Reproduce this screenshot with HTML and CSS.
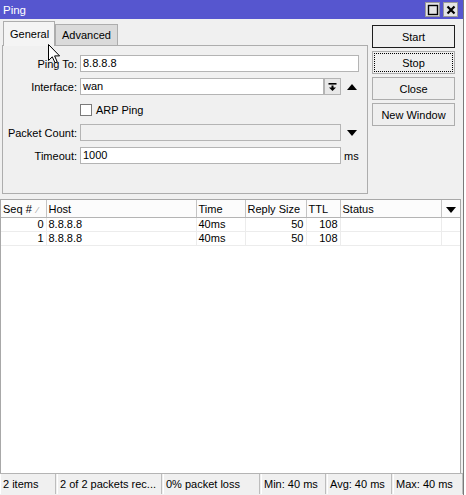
FILE: index.html
```html
<!DOCTYPE html>
<html>
<head>
<meta charset="utf-8">
<title>Ping</title>
<link rel="stylesheet" href="styles.css">
</head>
<body>
<div class="window">
  <div class="titlebar">
    <span class="title">Ping</span>
    <div class="tb-buttons">
      <span class="tb-btn"><svg width="12" height="12" viewBox="0 0 12 12"><rect x="1.5" y="1.5" width="9" height="9" fill="none" stroke="#000" stroke-width="1.4"/></svg></span>
      <span class="tb-btn"><svg width="12" height="12" viewBox="0 0 12 12"><path d="M2.5 2.5 L9.5 9.5 M9.5 2.5 L2.5 9.5" stroke="#000" stroke-width="2.2"/></svg></span>
    </div>
  </div>

  <div class="top">
    <div class="left">
      <div class="tabs">
        <div class="tab selected">General</div>
        <div class="tab">Advanced</div>
      </div>
      <div class="panel">
        <div class="row">
          <label class="lbl">Ping To:</label>
          <div class="input wide">8.8.8.8</div>
        </div>
        <div class="row">
          <label class="lbl">Interface:</label>
          <div class="input iface">wan</div>
          <span class="dd-btn"><svg width="9" height="10" viewBox="0 0 9 10"><rect x="0.5" y="1" width="8" height="1.6" fill="#000"/><rect x="3.5" y="3.5" width="2" height="2.5" fill="#000"/><path d="M1 5.5 L8 5.5 L4.5 9 Z" fill="#000"/></svg></span>
          <span class="arrow"><svg width="10" height="6" viewBox="0 0 10 6"><path d="M0 6 L10 6 L5 0 Z" fill="#000"/></svg></span>
        </div>
        <div class="row">
          <span class="lbl"></span>
          <span class="checkbox"></span>
          <span class="cb-text">ARP Ping</span>
        </div>
        <div class="row">
          <label class="lbl">Packet Count:</label>
          <div class="input std disabled"></div>
          <span class="arrow"><svg width="10" height="6" viewBox="0 0 10 6"><path d="M0 0 L10 0 L5 6 Z" fill="#000"/></svg></span>
        </div>
        <div class="row">
          <label class="lbl">Timeout:</label>
          <div class="input std">1000</div>
          <span class="unit">ms</span>
        </div>
      </div>
    </div>
    <div class="buttons">
      <div class="btn default">Start</div>
      <div class="btn focus">Stop</div>
      <div class="btn">Close</div>
      <div class="btn">New Window</div>
    </div>
  </div>

  <div class="grid">
    <table>
      <colgroup>
        <col class="c-seq"><col class="c-host"><col class="c-time"><col class="c-reply"><col class="c-ttl"><col class="c-status"><col class="c-menu">
      </colgroup>
      <thead>
        <tr>
          <th>Seq # <span class="sort">&#8260;</span></th>
          <th>Host</th>
          <th>Time</th>
          <th>Reply Size</th>
          <th>TTL</th>
          <th>Status</th>
          <th class="menu"><svg width="10" height="6" viewBox="0 0 10 6"><path d="M0 0 L10 0 L5 6 Z" fill="#000"/></svg></th>
        </tr>
      </thead>
      <tbody>
        <tr>
          <td class="num">0</td><td>8.8.8.8</td><td>40ms</td><td class="num">50</td><td class="num">108</td><td></td><td></td>
        </tr>
        <tr>
          <td class="num">1</td><td>8.8.8.8</td><td>40ms</td><td class="num">50</td><td class="num">108</td><td></td><td></td>
        </tr>
      </tbody>
    </table>
  </div>

  <div class="statusbar">
    <div class="cell s1">2 items</div>
    <div class="cell s2">2 of 2 packets rec...</div>
    <div class="cell s3">0% packet loss</div>
    <div class="cell s4">Min: 40 ms</div>
    <div class="cell s5">Avg: 40 ms</div>
    <div class="cell s6">Max: 40 ms</div>
  </div>

  <svg class="cursor" width="13" height="20" viewBox="0 0 13 20"><path d="M0.5 0.5 L0.5 16.5 L4.3 12.8 L7 18.8 L9.2 17.8 L6.6 11.9 L11.6 11.9 Z" fill="#fff" stroke="#000" stroke-width="1" stroke-linejoin="miter"/></svg>
</div>
</body>
</html>
```
FILE: styles.css
```css
html, body {
  margin: 0;
  padding: 0;
  background: #ffffff;
}
body {
  width: 466px;
  height: 495px;
  overflow: hidden;
  font-family: "Liberation Sans", Arial, sans-serif;
  font-size: 11px;
  color: #000;
}
.window {
  position: relative;
  width: 463px;
  height: 495px;
  background: #f0f0f0;
  border-right: 1px solid #7a7a7a;
}
.titlebar {
  height: 19px;
  background: #5656cf;
  display: flex;
  align-items: center;
  justify-content: space-between;
}
.title {
  color: #fff;
  font-size: 11.5px;
  padding-left: 3px;
  padding-top: 1px;
}
.tb-buttons {
  display: flex;
  gap: 3px;
  padding-right: 5px;
}
.tb-btn {
  width: 13px;
  height: 13px;
  background: #e4e4e4;
  border: 1px solid #9a9a9a;
  display: flex;
  align-items: center;
  justify-content: center;
}
.top {
  display: flex;
  padding-top: 2px;
}
.left {
  margin-left: 2px;
  width: 366px;
}
.tabs {
  display: flex;
  align-items: flex-end;
  height: 24px;
  padding-left: 1px;
}
.tab {
  box-sizing: border-box;
  height: 21px;
  padding: 0 6px 0 6px;
  border: 1px solid #adadad;
  border-bottom: none;
  background: #dadada;
  display: flex;
  align-items: center;
  width: 63px;
}
.tab.selected {
  height: 25px;
  width: 52px;
  margin-bottom: -1px;
  background: #f4f4f4;
  position: relative;
  z-index: 1;
  padding-bottom: 1px;
}
.panel {
  box-sizing: border-box;
  height: 149px;
  border: 1px solid #adadad;
  background: #f0f0f0;
  padding-top: 9px;
}
.row {
  display: flex;
  align-items: center;
  height: 17px;
  margin-bottom: 6px;
}
.lbl {
  width: 74px;
  text-align: right;
  flex: none;
}
.input {
  box-sizing: border-box;
  height: 17px;
  margin-left: 3px;
  border: 1px solid #b4b4b4;
  background: #fff;
  padding-left: 2px;
  line-height: 15px;
  flex: none;
}
.input.wide { width: 279px; }
.input.iface { width: 244px; }
.input.std { width: 261px; }
.input.disabled { background: #f0f0f0; }
.dd-btn {
  box-sizing: border-box;
  width: 17px;
  height: 17px;
  border: 1px solid #b4b4b4;
  background: #e8e8e8;
  display: flex;
  align-items: center;
  justify-content: center;
  flex: none;
}
.arrow {
  margin-left: 6px;
  display: flex;
  align-items: center;
}
.checkbox {
  box-sizing: border-box;
  width: 12px;
  height: 12px;
  margin-left: 3px;
  border: 1px solid #7a7a7a;
  background: #fff;
  flex: none;
}
.cb-text {
  margin-left: 4px;
}
.unit {
  margin-left: 3px;
}
.buttons {
  margin-left: 4px;
  margin-top: 4px;
  display: flex;
  flex-direction: column;
  gap: 3px;
}
.btn {
  box-sizing: border-box;
  width: 83px;
  height: 23px;
  border: 1px solid #adadad;
  background: #efefef;
  display: flex;
  align-items: center;
  justify-content: center;
}
.btn.default {
  border: 1px solid #1e1e1e;
}
.btn.focus {
  outline: 1px dotted #000;
  outline-offset: -3px;
}
.grid {
  box-sizing: border-box;
  margin-top: 5px;
  width: 461px;
  height: 274px;
  border: 1px solid #a8a8a8;
  border-bottom: none;
  background: #fff;
}
table {
  border-collapse: collapse;
  table-layout: fixed;
  width: 459px;
}
.c-seq { width: 45px; }
.c-host { width: 150px; }
.c-time { width: 49px; }
.c-reply { width: 61px; }
.c-ttl { width: 34px; }
.c-status { width: 101px; }
.c-menu { width: 19px; }
th {
  height: 17px;
  font-weight: normal;
  text-align: left;
  padding: 0 2px;
  border-right: 1px solid #c4c4c4;
  border-bottom: 1px solid #b4b4b4;
  background: #fcfcfc;
  white-space: nowrap;
  overflow: hidden;
}
th:last-child { border-right: none; }
th.menu {
  text-align: center;
  padding: 0;
}
.sort {
  color: #a0a0a0;
  font-size: 9px;
  margin-left: 2px;
}
td {
  height: 13px;
  padding: 0 2px;
  border-right: 1px solid #ececec;
  border-bottom: 1px solid #ececec;
  white-space: nowrap;
  overflow: hidden;
  line-height: 13px;
}
td:last-child { border-right: none; }
td.num { text-align: right; }
.statusbar {
  display: flex;
  gap: 1px;
  height: 21px;
  border-top: 1px solid #b4b4b4;
}
.cell {
  box-sizing: border-box;
  height: 20px;
  border-right: 1px solid #bdbdbd;
  border-left: 1px solid #ffffff;
  padding-left: 2px;
  display: flex;
  align-items: center;
  white-space: nowrap;
}
.s1 { width: 56px; }
.s2 { width: 105px; }
.s3 { width: 97px; }
.s4 { width: 65px; }
.s5 { width: 65px; }
.s6 { width: 70px; }
.cursor {
  position: absolute;
  left: 48px;
  top: 44px;
  z-index: 5;
}
```
